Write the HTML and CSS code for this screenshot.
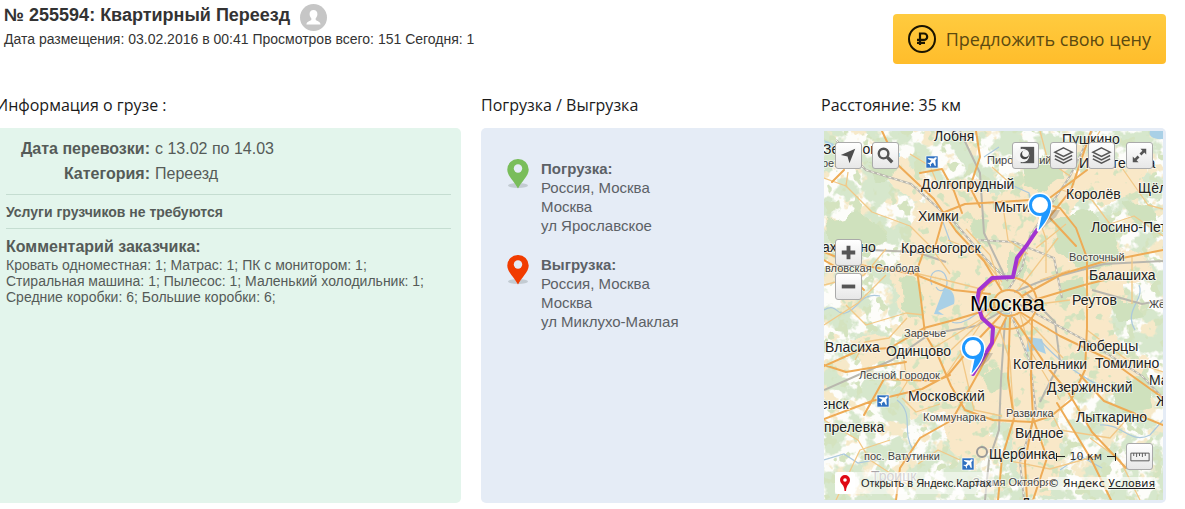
FILE: index.html
```html
<!DOCTYPE html>
<html lang="ru">
<head>
<meta charset="utf-8">
<title>№ 255594: Квартирный Переезд</title>
<link rel="stylesheet" href="styles.css">
</head>
<body>
<div class="page">
  <header class="top">
    <div class="summary">
      <div class="title-row">
        <h1 class="title">№ 255594: Квартирный Переезд</h1>
        <svg class="avatar" viewBox="0 0 27 27" aria-hidden="true">
          <circle cx="13.500" cy="13.500" r="13.500" fill="#c6c6c6"/>
          <path d="M13.500 6c2.600 0 4 1.900 3.900 4.300-.1 1.700-.8 3-1.700 3.900v1.700c1 .9 4.600 1.300 4.900 4.600H6.400c.3-3.300 3.900-3.700 4.900-4.600v-1.700c-.9-.9-1.600-2.200-1.700-3.900C9.500 7.900 10.900 6 13.500 6z" fill="#fff"/>
        </svg>
      </div>
      <p class="meta">Дата размещения: 03.02.2016 в 00:41 Просмотров всего: 151 Сегодня: 1</p>
    </div>
    <button class="offer" type="button">
      <svg class="offer-icon" viewBox="0 0 28 28" aria-hidden="true">
        <circle cx="14" cy="14" r="13" fill="none" stroke="#1a1400" stroke-width="2"/>
        <path d="M12 20V8.500h4a3.200 3.200 0 0 1 0 6.400H9M9 17.800h8" fill="none" stroke="#1a1400" stroke-width="2.200"/>
      </svg>
      <span>Предложить свою цену</span>
    </button>
  </header>

  <main class="details">
    <section class="cargo">
      <h2 class="heading">Информация о грузе :</h2>
      <div class="panel panel-green">
        <dl class="facts">
          <dt>Дата перевозки:</dt><dd>с 13.02 по 14.03</dd>
          <dt>Категория:</dt><dd>Переезд</dd>
        </dl>
        <p class="loaders">Услуги грузчиков не требуются</p>
        <h3 class="comment-title">Комментарий заказчика:</h3>
        <p class="comment">Кровать одноместная: 1; Матрас: 1; ПК с монитором: 1;<br>Стиральная машина: 1; Пылесос: 1; Маленький холодильник: 1;<br>Средние коробки: 6; Большие коробки: 6;</p>
      </div>
    </section>

    <section class="route">
      <div class="route-row">
        <h2 class="heading">Погрузка / Выгрузка</h2>
        <h2 class="heading">Расстояние: 35 км</h2>
      </div>
      <div class="panel panel-blue route-row">
        <div class="stops">
          <div class="stop stop-load">
            <svg class="pin" viewBox="0 0 22 30" aria-hidden="true"><ellipse cx="11" cy="26.500" rx="10" ry="2.500" fill="#c3cbd2"/><path d="M11 0a10.600 10.600 0 0 1 10.700 10.700C21.700 17 14 23 11 29.500 8 23 .3 17 .3 10.700A10.600 10.600 0 0 1 11 0z" fill="currentColor"/><circle cx="11" cy="9.500" r="4.200" fill="#e5ecf6"/></svg>
            <address class="address"><b>Погрузка:</b><br>Россия, Москва<br>Москва<br>ул Ярославское</address>
          </div>
          <div class="stop stop-unload">
            <svg class="pin" viewBox="0 0 22 30" aria-hidden="true"><ellipse cx="11" cy="26.500" rx="10" ry="2.500" fill="#c3cbd2"/><path d="M11 0a10.600 10.600 0 0 1 10.700 10.700C21.700 17 14 23 11 29.500 8 23 .3 17 .3 10.700A10.600 10.600 0 0 1 11 0z" fill="currentColor"/><circle cx="11" cy="9.500" r="4.200" fill="#e5ecf6"/></svg>
            <address class="address"><b>Выгрузка:</b><br>Россия, Москва<br>Москва<br>ул Миклухо-Маклая</address>
          </div>
        </div>

        <div class="map">
          <svg class="map-canvas" viewBox="824 131 339 369" preserveAspectRatio="xMidYMid slice" role="img" aria-label="Карта маршрута">
            <defs>
              <filter id="woods" x="0" y="0" width="100%" height="100%" color-interpolation-filters="sRGB">
                <feTurbulence type="fractalNoise" baseFrequency="0.045" numOctaves="4" seed="7"/>
                <feColorMatrix values="0 0 0 0 0.840  0 0 0 0 0.905  0 0 0 0 0.800  12 0 0 0 -5.700"/>
              </filter>
              <filter id="fields" x="0" y="0" width="100%" height="100%" color-interpolation-filters="sRGB">
                <feTurbulence type="fractalNoise" baseFrequency="0.05" numOctaves="4" seed="23"/>
                <feColorMatrix values="0 0 0 0 0.965  0 0 0 0 0.915  0 0 0 0 0.790  0 14 0 0 -7.500"/>
              </filter>
              <filter id="groves" x="0" y="0" width="100%" height="100%" color-interpolation-filters="sRGB">
                <feTurbulence type="fractalNoise" baseFrequency="0.08" numOctaves="3" seed="11"/>
                <feColorMatrix values="0 0 0 0 0.830  0 0 0 0 0.890  0 0 0 0 0.750  0 0 14 0 -8.300"/>
              </filter>
              <filter id="rough" x="-10%" y="-10%" width="120%" height="120%">
                <feTurbulence type="fractalNoise" baseFrequency="0.06" numOctaves="3" seed="4"/>
                <feDisplacementMap in="SourceGraphic" scale="14" xChannelSelector="R" yChannelSelector="G"/>
              </filter>
              <g id="plane">
                <rect x="-6" y="-6" width="12" height="12" fill="#2d6fc0" stroke="#fff" stroke-width=".6"/>
                <path d="M4.500-4.500c-.8-.6-1.800 0-2.600.9L-3.500-4l-.8.800 3.700 2L-2.500 1l-1.700-.3-.5.6 2.200 1 1 2.200.6-.5L-1.200 2.300 1 .500l2 3.700.8-.800L3.300-1.900c1.100-.9 1.700-1.900 1.200-2.600z" fill="#fff"/>
              </g>
              <g id="marker">
                <path d="M2 24l14-12 4-7-9 0z" fill="#555" opacity=".25"/>
                <path d="M10 2C9.500 11 4 19-1.500 25L1 10z" fill="#fff" stroke="#fff" stroke-width="3.500" stroke-linejoin="round"/>
                <circle r="12.500" fill="#fff"/>
                <path d="M11 0C11 10 5 18-1.500 25.500L2 9z" fill="#1e98ff"/>
                <circle r="9.500" fill="#fff" stroke="#1e98ff" stroke-width="3"/>
              </g>
            </defs>
            <rect x="824" y="131" width="339" height="369" fill="#fdfdfa"/>
            <rect x="824" y="131" width="339" height="369" filter="url(#fields)"/>
            <rect x="824" y="131" width="339" height="369" filter="url(#woods)"/>

            <!-- built-up area -->
            <g filter="url(#rough)" fill="#f9e8c8">
              <path d="M930 186l45-8 20 18 30-20 40-12 25 15-18 35 18 30 42 16-8 40-20 20 30 40-10 35-38-18-20 25-20 30 -35-10-35 15-35-25-30 8-12-35 5-60-12-55 18-40z"/>
              <path d="M878 150l25 8 30 25-18 20-25-22zM1070 175l40-15 35 8-5 25-40 12zM1095 255l50-4 8 25-45 15zM850 340l40-6 10 20-35 15zM1010 415l45-8 10 35-15 55-25-5-12-40zM910 390l35-5 10 18-35 8zM1090 345l60 12-10 25-45-8zM940 415l45 0 8 35-20 20-22-20z"/>
            </g>
            <rect x="824" y="131" width="339" height="369" filter="url(#groves)"/>
            <!-- parks and forests -->
            <g filter="url(#rough)" fill="#cfe1bd">
              <path d="M1050 222l38-12 32 26-4 28-32 8-26-22zM1056 282l28-2 2 18-30 2zM900 275l18 5 4 40-18-8zM828 220l30-8 30 22-18 25-40-8zM1108 385l36-6 10 28-34 6zM1022 165l30-10 10 22-20 14-16-8zM868 160l18-4 10 16-16 12zM982 375l16-8 10 20-16 8zM1010 252l16 12-4 18-12-6zM972 218l18 4-4 22-16-8zM1120 205l30-5 8 20-20 8zM1110 300l26 0 6 18-24 4zM982 300l14-4 4 16-12 4z"/>
            </g>
            <!-- water -->
            <g fill="#a9d0e6">
              <path d="M944 288c8 0 12 8 10 16l-16 7 6 4-10-1zM1028 337l14 2 4 15-10-4-10 2z"/>
              <path d="M1150 131c-2 5 3 9 13 8v-8zM824 140l10 4-4 8z"/>
            </g>
            <g fill="none" stroke="#acc9dd" stroke-width="1.200">
              <path d="M932 285c-6-14 10-20 14-8s-6 18-10 10M984 157l15-10M824 310c14-8 12 8 24 2s14-20 32-16M897 400c18 14 4 30 16 50M943 222l8 22M1135 330c-12-20 10-30 4-45M1060 470l20-14 22 12M1012 312c-14 8-18-12-28-4s-22 18-32 14M1100 425c22-2 30 20 50 10l13-15M1040 340c12 14 30 30 58 45M824 460l20-6 14 9 22-4M870 484l20-8M1007 183l22 10 4 18"/>
            </g>
            <!-- railways -->
            <g fill="none" stroke="#b9b7ae" stroke-width="2">
              <path d="M836 140l30 30 45 14 45 40 30 35 22 22M1008 290l14-22 8-32 40-60 22-45M1012 300l28 16 52 28 50 32 21 22M1004 310l-28 16-46 8-38 26-68 30M1010 312l20 50 6 50-16 50 4 38M1014 292l30-12 60-16 59-3M960 131l20 42 4 60 22 46M946 262l-30-10-92-4M1092 290l50 14 21-4M1025 292l30 30 5 40-20 40M978 240l36 2 40 16 8 40"/>
              <path d="M985 500l4-40 10-30 2-50 4-60"/>
            </g>
            <g fill="none" stroke="#f6f2e8" stroke-width="1" stroke-dasharray="3 3">
              <path d="M836 140l30 30 45 14 45 40 30 35 22 22M1008 290l14-22 8-32 40-60 22-45M1012 300l28 16 52 28 50 32 21 22M1010 312l20 50 6 50-16 50 4 38M978 240l36 2 40 16 8 40"/>
            </g>
            <!-- minor roads -->
            <g fill="none" stroke="#f2c887" stroke-width="1.300" stroke-linejoin="round">
              <path d="M824 178l22 8 26 26 38 14 20 20 20 28M846 186l2-14M824 285l40-10 22-26M824 325l34-22 28-28M846 305l20 20 40-12 18 2M1100 131l-12 20M1120 165l28 40 15 4M1062 190l30 10 18 24 24-8 29 20M1132 256l0 48M1087 330l40 30 36 12M1000 331l10 30 4 60-14 40M930 350l50-30M946 375l34-50M951 350l44-42M985 290l-40-10-35-8M1000 285l-10-30-24-26M1018 290l40-52M824 420l34 20 12 20 46 30M902 398l14 14 24-8M1050 410l10 20 50 8 16-18M1010 461l40 8 50-14M960 460l-22-10-20 14M1040 131l8 30 22 15M1012 185l-20-18M855 360l10-18 24-4 18-20M836 500l24-50 30-10M940 190l-10-24-20-12M1070 270l-30 10M1070 300l-46 6M1063 358l-44-46M960 350l14 60 28 6M1060 400l-30-50-10-36M1140 500l-20-40-30-22M903 352l4 30-10 16M948 240l30 12 24 30M1002 200l6 40 20 14M1034 205l12 34 0 34M1066 224l-30 24"/>
            </g>
            <!-- highways -->
            <g fill="none" stroke="#eeab56" stroke-width="2" stroke-linejoin="round" stroke-linecap="round">
              <path d="M935 247l10-35 20-8 35-2 30-2 30 8 16 20 11 30v70l-2 42-14 30-20 16-18 6-40-2-28-10-14-24-12-28-14-24-4-34-4-30 8-22z"/>
              <ellipse cx="1009" cy="303" rx="15" ry="13"/><ellipse cx="1008" cy="303" rx="29" ry="26"/>
              <path d="M882 131l16 34 36 34 22 32 28 30 18 30M920 173l22-4 12 22 8 22M976 131l4 26-10 30 10 20M1012 278l15-34 20-24 24-30 20-59M1050 218l26 28M1022 296l40-22 40-12 61-12M1024 303l60-18 40-10M1020 312l40 24 50 24 53 38M1014 318l34 50 20 24 24 40 34 36M1010 318l-2 60 6 40-12 40-4 42M1000 316l-28 30-24 29-26 14-50 12-48 18M994 308l-40 12-30 8-34 20-30 2-36 16M990 294l-36-4-40-16-60-10-30-12M1006 318l-26 52-28 50-32 18-20 30-4 32M1032 318l-1 60 2 40-8 44 2 38M950 375l-14 6-52-2-20 36M1080 375l24 26 59 24M1057 403l34 56 20 41M1033 418l14 40-14 42M824 260l24 14 16 16M832 182l12-12M1087 170l-40 30M824 365l22 7 60-10"/>
            </g>

            <path d="M1037 230l-10 15-10 13-4 19-21 1-13 12-2 12 5 16 11 10-1 15-19 31" fill="none" stroke="#a233d2" stroke-width="4" stroke-linejoin="round" stroke-linecap="round"/>
            <use href="#plane" x="932" y="162"/><use href="#plane" x="883" y="401"/><use href="#plane" x="968" y="464"/>
            <circle cx="982" cy="452" r="5" fill="none" stroke="#999" stroke-width="2"/>

            <g class="place">
              <text x="823" y="154">Зеленоград</text><text x="934" y="141">Лобня</text><text x="1062" y="144">Пушкино</text>
              <text x="921" y="189">Долгопрудный</text><text x="1066" y="199">Королёв</text><text x="1138" y="193">Щёлково</text>
              <text x="918" y="221">Химки</text><text x="994" y="212">Мытищи</text><text x="1091" y="232">Лосино-Петровский</text>
              <text x="822" y="252">ахабино</text><text x="901" y="253">Красногорск</text><text x="1089" y="280">Балашиха</text>
              <text x="1072" y="305">Реутов</text><text x="825" y="352">Власиха</text><text x="886" y="356">Одинцово</text>
              <text x="1077" y="351">Люберцы</text><text x="1013" y="369">Котельники</text><text x="1095" y="368">Томилино</text>
              <text x="1047" y="392">Дзержинский</text><text x="908" y="401">Московский</text><text x="820" y="409">енск</text>
              <text x="824" y="432">прелевка</text><text x="1076" y="422">Лыткарино</text><text x="1015" y="438">Видное</text>
              <text x="989" y="459">Щербинка</text><text x="1149" y="385">Малаховка</text><text x="1156" y="406">Жуковский</text>
              <text x="1079" y="168">Ивантеевка</text><text x="1021" y="508">Домодедово</text>
            </g>
            <g class="place place-small">
              <text x="822" y="167">ревка</text><text x="987" y="164">Пироговский</text><text x="1069" y="261">Восточный</text>
              <text x="825" y="272">вловская Слобода</text><text x="904" y="337">Заречье</text><text x="859" y="379">Лесной Городок</text>
              <text x="923" y="421">Коммунарка</text><text x="1006" y="417">Развилка</text><text x="864" y="460">пос. Ватутинки</text>
              <text x="1149" y="308">Железнодорожный</text><text x="973" y="486">Знамя Октября</text>
            </g>
            <text class="place place-faded" x="871" y="481">Троицк</text>
            <text class="place place-city" x="970" y="311">Москва</text>
            <use href="#marker" x="1040" y="205"/>
            <use href="#marker" x="973" y="348"/>
          </svg>

          <div class="map-group map-tools-left">
            <button class="map-button" type="button" aria-label="Моё местоположение"><svg viewBox="0 0 26 26"><path d="M20 6L5 12.500l7 1.500 2 7z" fill="#4d4d4d"/></svg></button>
            <button class="map-button" type="button" aria-label="Поиск"><svg viewBox="0 0 26 26"><circle cx="11" cy="11" r="5" fill="none" stroke="#555" stroke-width="2.500"/><path d="M15 15l5 5" stroke="#555" stroke-width="3.500"/></svg></button>
          </div>
          <div class="map-group map-tools-right">
            <button class="map-button" type="button" aria-label="Панорамы"><svg viewBox="0 0 26 26"><path d="M8 4h14v17H8z" fill="#555"/><circle cx="10" cy="13" r="7" fill="#f4f4f4"/><circle cx="12" cy="12.500" r="4.500" fill="#444"/><circle cx="13" cy="11" r="3.500" fill="#f4f4f4"/></svg></button>
            <button class="map-button" type="button" aria-label="Слои"><svg viewBox="0 0 26 26"><path d="M13 5l9 4.500-9 4.500-9-4.500zM4 13l9 4.500 9-4.500M4 16.500L13 21l9-4.500" fill="none" stroke="#555" stroke-width="1.500"/></svg></button>
            <button class="map-button" type="button" aria-label="Тип карты"><svg viewBox="0 0 26 26"><path d="M13 5l9 4.500-9 4.500-9-4.500zM4 13l9 4.500 9-4.500M4 16.500L13 21l9-4.500" fill="none" stroke="#555" stroke-width="1.500"/></svg></button>
            <button class="map-button" type="button" aria-label="На весь экран"><svg viewBox="0 0 26 26"><path d="M20 6v6l-2-2-3 3-2-2 3-3-2-2zM6 20v-6l2 2 3-3 2 2-3 3 2 2z" fill="#555"/></svg></button>
          </div>
          <div class="map-group map-zoom">
            <button class="map-button" type="button" aria-label="Приблизить"><svg viewBox="0 0 26 26"><path d="M13 6v14M6 13h14" stroke="#555" stroke-width="4"/></svg></button>
            <button class="map-button" type="button" aria-label="Отдалить"><svg viewBox="0 0 26 26"><path d="M6 13h14" stroke="#555" stroke-width="4"/></svg></button>
          </div>
          <div class="map-group map-scale">
            <span class="scale-mark scale-start"></span><span class="scale-text">10 км</span><span class="scale-mark scale-end"></span>
            <button class="map-button" type="button" aria-label="Линейка"><svg viewBox="0 0 26 26"><path d="M4 9.500h19v8H4zM7 9.500v3M10 9.500v4M13 9.500v3M16 9.500v4M19 9.500v3" fill="none" stroke="#555"/></svg></button>
          </div>
          <div class="map-footer">
            <a class="map-open" href="#"><span class="map-logo"><svg viewBox="0 0 20 22"><path d="M10 3a5 5 0 0 1 5 5c0 4-3.500 4-4 11H9.500C9.500 12 5 12 5 8a5 5 0 0 1 5-5z" fill="#e00914"/><circle cx="10" cy="8" r="1.800" fill="#fff"/></svg></span>Открыть в Яндекс.Картах</a>
            <span class="map-terms">© Яндекс <a href="#">Условия</a></span>
          </div>
        </div>
      </div>
    </section>
  </main>
</div>
</body>
</html>
```
FILE: styles.css
```css
* { box-sizing: border-box; }
body { margin: 0; background: #fff; color: #555b58; font-family: "Liberation Sans", Arial, sans-serif; overflow-x: hidden; }
h1, h2, h3, p, dl, dd { margin: 0; }
.page { margin-left: -4px; padding: 4px 19px 6px 0; }

.top { display: flex; justify-content: space-between; align-items: flex-start; height: 88px; }
.summary { padding-left: 8px; color: #333; }
.title-row { display: flex; align-items: flex-start; gap: 10px; }
.title { font-size: 18px; line-height: 22px; }
.avatar { width: 27px; height: 27px; }
.meta { font-size: 14px; line-height: 16px; }
.offer { display: flex; align-items: center; gap: 10px; height: 50px; margin-top: 10px; padding: 0 15px; border: 0; border-radius: 4px; background: linear-gradient(#ffcb3f, #ffbd2b); color: #5c4a10; font: 400 18px "Open Sans", sans-serif; }
.offer-icon { width: 28px; height: 28px; }

.details { display: flex; gap: 20px; }
.cargo { flex: 465 1 0; }
.route { flex: 685 1 0; }
.heading { font: 400 16px/26px "Open Sans", sans-serif; color: #1a1a1a; padding-bottom: 10px; }
.route-row { display: grid; grid-template-columns: 1fr 345px; }
.panel { height: 375px; border-radius: 5px; }

.panel-green { background: #e3f5ec; padding: 8px 10px 0; }
.facts { display: grid; grid-template-columns: 144px 1fr; column-gap: 5px; padding-bottom: 8px; border-bottom: 1px solid #c5ddd1; font-size: 16px; line-height: 25px; }
.facts dt { font-weight: bold; text-align: right; }
.loaders { padding: 9px 0 8px; border-bottom: 1px solid #c5ddd1; font-size: 14px; line-height: 16px; font-weight: bold; }
.comment-title { padding-top: 8px; font-size: 16px; line-height: 20px; }
.comment { font-size: 14px; line-height: 16px; }

.panel-blue { background: #e5ecf6; padding: 3px 0; }
.stops { display: flex; flex-direction: column; gap: 20px; padding: 28px 0 0 26px; }
.stop { display: flex; gap: 12px; }
.stop-load { color: #79bd5a; }
.stop-unload { color: #f13c00; }
.pin { width: 22px; height: 30px; flex: none; }
.address { color: #5c6166; font-size: 15px; line-height: 19px; font-style: normal; }

.map { position: relative; margin: 0 3px; overflow: hidden; }
.map-canvas { display: block; width: 100%; height: 100%; }
.place { font-family: "Liberation Sans", Arial, sans-serif; font-size: 14px; fill: #222; stroke: #fff; stroke-width: 2px; stroke-opacity: .6; paint-order: stroke; }
.place-small { font-size: 11px; fill: #444; }
.place-faded { fill: #a9a4a8; }
.place-city { font-size: 22px; fill: #000; }

.map-group { position: absolute; display: flex; align-items: center; }
.map-tools-left { top: 11px; left: 11px; gap: 10px; }
.map-tools-right { top: 11px; right: 10px; gap: 11px; }
.map-zoom { top: 108px; left: 11px; flex-direction: column; gap: 7px; }
.map-scale { right: 10px; bottom: 30px; }
.map-button { display: block; width: 27px; height: 27px; padding: 0; border: 1px solid #aaa; border-radius: 3px; background: linear-gradient(#fff, #e7e7e7); }
.map-button svg { display: block; width: 100%; height: 100%; }
.scale-mark { width: 9px; height: 8px; background: linear-gradient(#222, #222) center / 100% 1px no-repeat; }
.scale-start { border-left: 1px solid #222; }
.scale-end { border-right: 1px solid #222; }
.scale-text { padding: 0 5px; color: #333; font: 11px "DejaVu Sans", sans-serif; }
.scale-end + .map-button { margin-left: 10px; }
.map-footer { position: absolute; left: 11px; right: 8px; bottom: 6px; display: flex; justify-content: space-between; align-items: center; color: #222; font: 11px "DejaVu Sans", sans-serif; }
.map-footer a { color: #222; }
.map-open { display: flex; align-items: center; gap: 6px; padding-right: 3px; background: rgba(255, 255, 255, .5); font: 11px "Liberation Sans", Arial, sans-serif; text-decoration: none; }
.map-logo { width: 20px; height: 22px; background: #fff; border-radius: 3px; }
.map-logo svg { display: block; width: 20px; height: 22px; }
.map-terms { background: rgba(255, 255, 255, .6); }
```
